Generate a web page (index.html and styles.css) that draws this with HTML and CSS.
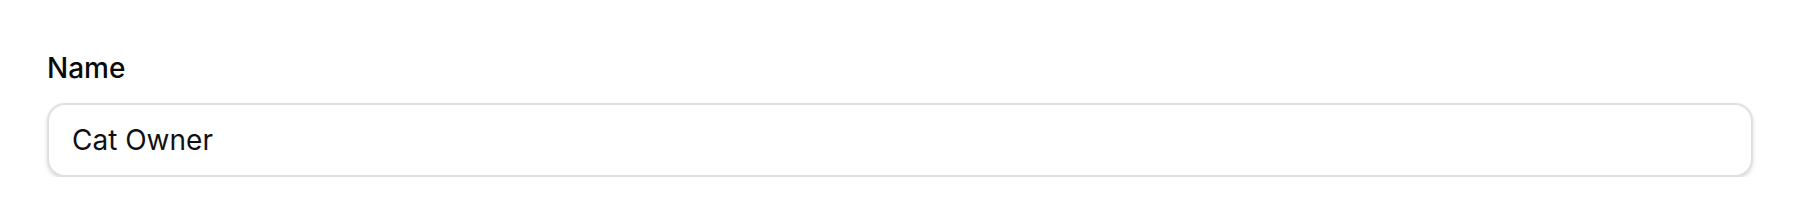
FILE: index.html
```html
<!DOCTYPE html>
<html>
<head>
<meta charset="utf-8">
<link rel="stylesheet" href="styles.css">
</head>
<body>
<div class="field">
  <label class="field-label" for="name">Name</label>
  <input class="field-input" id="name" type="text" value="Cat Owner">
</div>
</body>
</html>
```
FILE: styles.css
```css
html, body {
  margin: 0;
  background: #ffffff;
}
body {
  font-family: Inter, "Liberation Sans", sans-serif;
}
.field {
  display: flex;
  flex-direction: column;
  gap: 15px;
  padding: 48px 47px 0 47px;
}
.field-label {
  font-size: 28px;
  line-height: 40px;
  font-weight: 500;
  color: #0a0a0a;
}
.field-input {
  box-sizing: border-box;
  width: 100%;
  height: 74px;
  margin: 0;
  padding: 0 23px;
  border: 2px solid #e0e0e0;
  border-radius: 18px;
  background: #ffffff;
  box-shadow: 0 2px 4px rgba(0, 0, 0, 0.14);
  font-family: Inter, "Liberation Sans", sans-serif;
  font-size: 28px;
  font-weight: 400;
  color: #111111;
  outline: none;
}
```
